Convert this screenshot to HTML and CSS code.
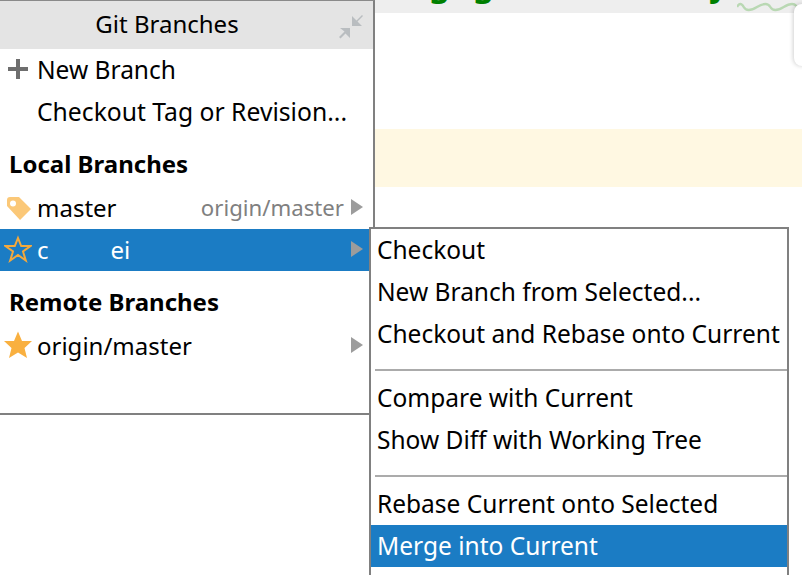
FILE: index.html
```html
<!DOCTYPE html>
<html lang="en">
<head>
<meta charset="utf-8">
<title>Git Branches</title>
<link rel="stylesheet" href="styles.css">
</head>
<body>
<div class="editor">
  <div class="strip">
    <div class="code"><span>g</span><span>g</span><span class="tail">y</span></div>
    <svg class="wave" width="60" height="12" viewBox="0 0 60 12"><path d="M0 7Q3.3 1 6.700 7T20 7T33.300 7T46.700 7T60 7" fill="none" stroke="#b9d8b3" stroke-width="2.400"/></svg>
  </div>
  <div class="highlight"></div>
  <div class="card"></div>
</div>

<section class="popup">
  <header class="title">
    <span>Git Branches</span>
    <svg class="collapse" width="26" height="26" viewBox="0 0 26 26"><path d="M13 3V13H23L18.500 8.500L24 3L23 2L17.500 7.500Z M1 15H11V25L6.500 20.500L1.500 25.500L0 24L5.500 18.500Z" fill="#b9bdc0"/></svg>
  </header>
  <div class="row"><svg class="icon" width="28" height="28" viewBox="0 0 28 28"><path d="M12 4H16V12H24V16H16V24H12V16H4V12H12Z" fill="#6e6e6e"/></svg><span class="label wide">New Branch</span></div>
  <div class="row"><span class="icon"></span><span class="label wider">Checkout Tag or Revision...</span></div>
  <h2 class="heading">Local Branches</h2>
  <div class="row"><svg class="icon" width="28" height="28" viewBox="0 0 28 28"><path fill-rule="evenodd" d="M3 7Q3 4 6 4H15L27 16L16 27L3 13Z M9 7.500A3 3 0 1 0 9 13.500A3 3 0 1 0 9 7.500Z" fill="#fbc878"/></svg><span class="label">master</span><span class="track">origin/master</span><i class="arrow"></i></div>
  <div class="row selected"><svg class="icon" width="28" height="28" viewBox="0 0 28 28"><path d="M14 3L17.200 11H26.500L19 16.500L21.800 25.500L14 20L6.200 25.500L9 16.500L1.500 11H10.800Z" fill="none" stroke="#f4a93c" stroke-width="2"/></svg><span class="label">c<span class="hidden-part">ei</span></span><i class="arrow"></i></div>
  <h2 class="heading">Remote Branches</h2>
  <div class="row"><svg class="icon" width="28" height="28" viewBox="0 0 28 28"><path d="M14 0.500L18 10H28L20.500 17L23 27L14 21.500L5 27L7.500 17L0 10H10Z" fill="#f9b040"/></svg><span class="label">origin/master</span><i class="arrow"></i></div>
</section>

<section class="submenu">
  <div class="item">Checkout</div>
  <div class="item">New Branch from Selected...</div>
  <div class="item">Checkout and Rebase onto Current</div>
  <div class="sep"></div>
  <div class="item">Compare with Current</div>
  <div class="item">Show Diff with Working Tree</div>
  <div class="sep"></div>
  <div class="item">Rebase Current onto Selected</div>
  <div class="item active">Merge into Current</div>
  <div class="item"></div>
</section>
</body>
</html>
```
FILE: styles.css
```css
* { box-sizing: border-box; }
html, body { margin: 0; height: 100%; overflow: hidden; background: #fff; }
body { position: relative; width: 802px; height: 575px; font-family: "Noto Sans", "Open Sans", sans-serif; font-size: 24px; color: #000; }

.editor { padding-left: 375px; }
.strip { position: relative; height: 13px; background: #eeeeee; overflow: hidden; }
.code { display: flex; margin-top: -33px; padding-left: 54px; font: 700 33px/34px "Noto Sans", sans-serif; color: #008000; }
.code span { width: 44px; }
.code .tail { margin-left: 192px; }
.wave { position: absolute; left: 362px; top: 0; }
.highlight { height: 58px; margin-top: 116px; background: #fff8e2; }
.card { position: absolute; right: -20px; top: 4px; width: 28px; height: 62px; background: #fff; border-radius: 8px; box-shadow: -1px 0 4px rgba(0,0,0,.18); }

.popup { position: absolute; left: 0; top: 0; width: 375px; height: 415px; background: #fff; border-top: 1px solid #8a8a8a; border-right: 2px solid #808080; border-bottom: 2px solid #808080; }
.title { position: relative; height: 48px; background: #e4e4e4; display: flex; align-items: center; justify-content: center; padding: 0 39px 4px 0; }
.collapse { position: absolute; right: 8px; top: 12px; }

.row { display: flex; align-items: center; height: 42px; padding: 0 10px 2px 4px; white-space: nowrap; }
.icon { flex: none; width: 28px; height: 28px; margin-right: 5px; }
.label { flex: 1; }
.wide { font-size: 24.500px; }
.wider { font-size: 24.700px; }
.track { color: #808080; font-size: 22.200px; margin-right: 7px; }
.arrow { flex: none; width: 0; height: 0; border-left: 12px solid #9c9c9c; border-top: 8px solid transparent; border-bottom: 8px solid transparent; }
.selected { background: #1b7cc4; color: #fff; }
.hidden-part { margin-left: 62px; }
.heading { margin: 0; height: 54px; padding: 15px 0 0 9px; font-size: 24px; line-height: 32px; font-weight: 700; }

.submenu { position: absolute; left: 369px; top: 227px; width: 420px; height: 360px; background: #fff; border: 2px solid #808080; border-bottom: 0; font-size: 24.500px; }
.item { height: 42px; padding-left: 6px; line-height: 41px; white-space: nowrap; }
.sep { height: 22px; padding: 14px 0 6px 4px; }
.sep::before { content: ""; display: block; height: 2px; background: #ababab; }
.active { background: #1b7cc4; color: #fff; }
```
